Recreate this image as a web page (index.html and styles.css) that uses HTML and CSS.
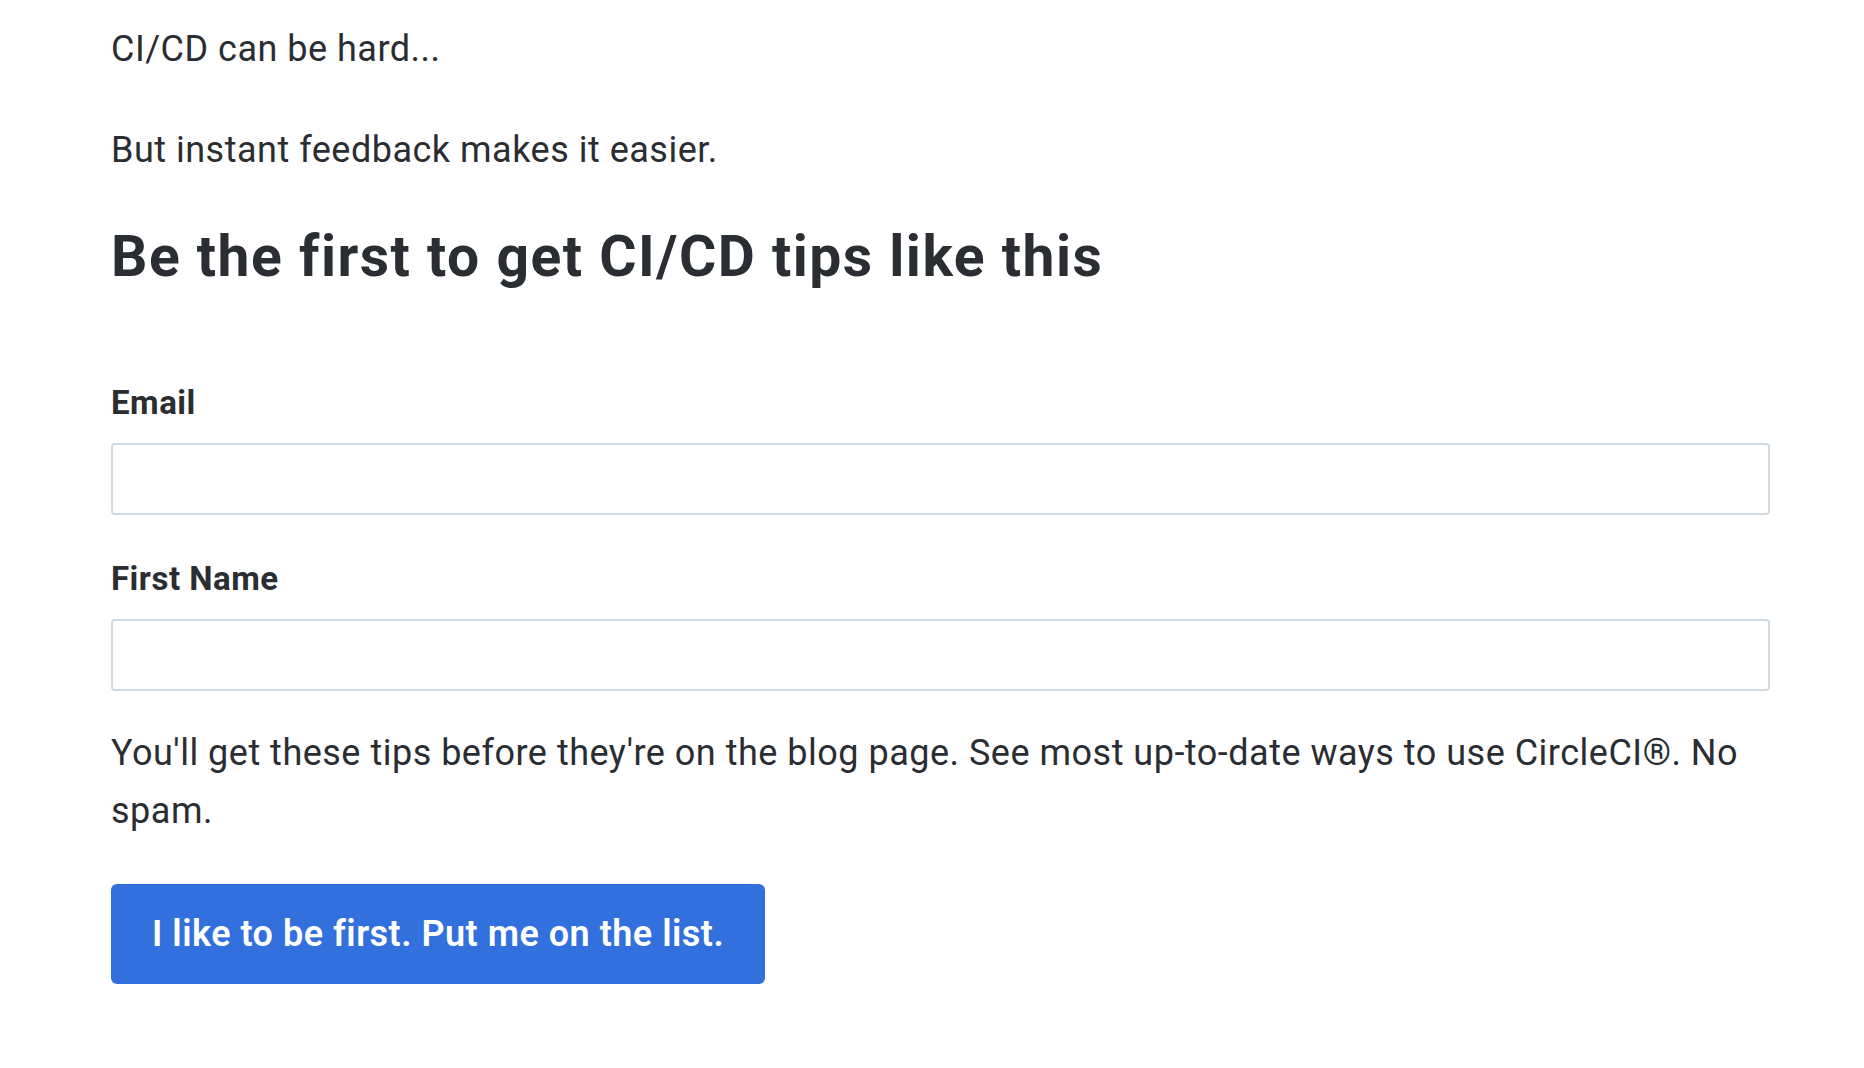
FILE: index.html
```html
<!DOCTYPE html>
<html lang="en">
<head>
<meta charset="utf-8">
<title>CI/CD tips</title>
<link rel="stylesheet" href="styles.css">
</head>
<body>
<main class="page">
  <p class="lead">CI/CD can be hard...</p>
  <p class="lead">But instant feedback makes it easier.</p>
  <h2 class="title">Be the first to get CI/CD tips like this</h2>
  <form class="signup">
    <label class="field-label" for="email">Email</label>
    <input class="field-input" id="email" type="email">
    <label class="field-label second" for="fname">First Name</label>
    <input class="field-input" id="fname" type="text">
    <p class="note">You'll get these tips before they're on the blog page. See most up-to-date ways to use CircleCI®. No spam.</p>
    <button class="submit" type="button">I like to be first. Put me on the list.</button>
  </form>
</main>
</body>
</html>
```
FILE: styles.css
```css
html, body {
  margin: 0;
  padding: 0;
  background: #ffffff;
}
body {
  font-family: Roboto, "Liberation Sans", sans-serif;
  color: #2a2d32;
}
.page {
  width: 1659px;
  padding: 21px 0 0 111px;
}
.lead {
  margin: 0 0 43.5px 0;
  font-size: 36px;
  line-height: 57.6px;
  letter-spacing: 0.5px;
}
.title {
  margin: 4px 0 0 0;
  font-size: 57px;
  line-height: 67px;
  font-weight: 700;
  letter-spacing: 1.5px;
}
.signup {
  display: flex;
  flex-direction: column;
  align-items: flex-start;
  margin-top: 87px;
}
.field-label {
  font-size: 33px;
  line-height: 51px;
  font-weight: 700;
  letter-spacing: 0.5px;
  margin-bottom: 15px;
}
.field-label.second {
  margin-top: 38px;
}
.field-input {
  box-sizing: border-box;
  width: 1659px;
  height: 72px;
  margin: 0;
  border: 2px solid #d1dbe4;
  border-radius: 4px;
  background: #fff;
  font: inherit;
}
.note {
  margin: 34px 0 0 0;
  font-size: 36px;
  line-height: 57.6px;
  letter-spacing: 0.5px;
}
.submit {
  margin-top: 44px;
  height: 100px;
  padding: 0 41px;
  border: 0;
  border-radius: 6px;
  background: #3170dd;
  color: #ffffff;
  font-family: Roboto, "Liberation Sans", sans-serif;
  font-size: 36px;
  font-weight: 600;
  letter-spacing: 0.5px;
}
```
